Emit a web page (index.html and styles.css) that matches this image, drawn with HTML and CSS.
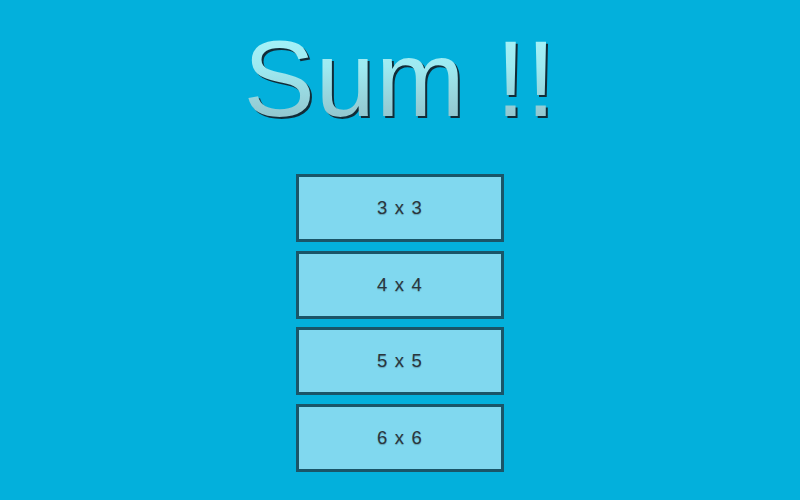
FILE: index.html
```html
<!DOCTYPE html>
<html>
<head>
<meta charset="utf-8">
<link rel="stylesheet" href="styles.css">
</head>
<body>
<div class="page">
  <h1 class="title">Sum !!</h1>
  <div class="menu">
    <button class="btn">3 x 3</button>
    <button class="btn">4 x 4</button>
    <button class="btn">5 x 5</button>
    <button class="btn">6 x 6</button>
  </div>
</div>
</body>
</html>
```
FILE: styles.css
```css
html, body {
  margin: 0;
  padding: 0;
  width: 800px;
  height: 500px;
  background: #03b0dc;
  overflow: hidden;
}
.page {
  display: flex;
  flex-direction: column;
  align-items: center;
  font-family: "Liberation Sans", Arial, sans-serif;
}
.title {
  margin: 18px 0 0 0;
  font-size: 107px;
  font-weight: normal;
  line-height: 122px;
  height: 122px;
  letter-spacing: 0.6px;
  background: linear-gradient(180deg, #a8f7fc 0%, #9eeaf1 40%, #8db6bf 100%);
  background-clip: text;
  -webkit-background-clip: text;
  color: transparent;
  filter: drop-shadow(2.5px 2.5px 0.5px #112c38);
}
.menu {
  margin-top: 34px;
  display: flex;
  flex-direction: column;
  gap: 8.5px;
}
.btn {
  box-sizing: border-box;
  width: 208px;
  height: 68px;
  background: #80d8ef;
  border: 3px solid #1a5568;
  font-family: "Liberation Sans", Arial, sans-serif;
  font-size: 18.5px;
  color: #2a363d;
  letter-spacing: 1.2px;
  text-shadow: 0 1px 1px rgba(0,0,0,0.25);
  padding: 0;
}
```
